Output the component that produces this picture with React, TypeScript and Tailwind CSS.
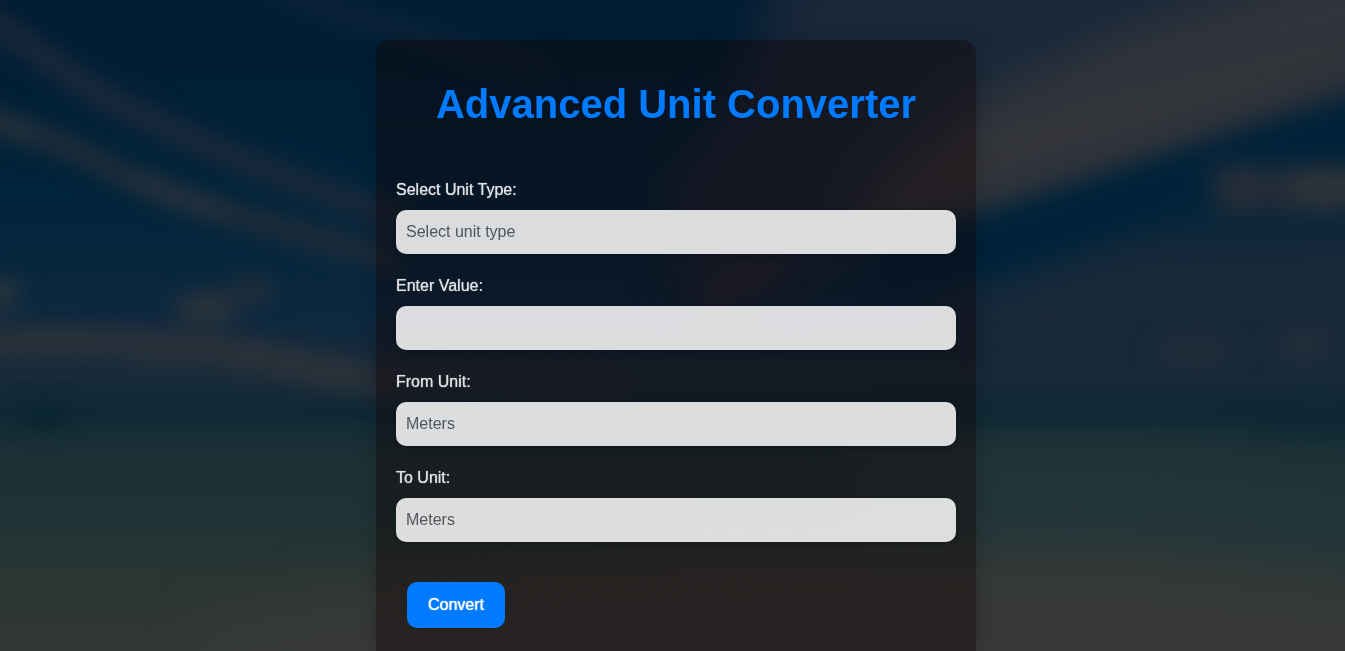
import { useState } from "react";
import type { FormEvent } from "react";

const units: Record<string, string[]> = {
  length: ["Meters", "Kilometers", "Miles", "Feet"],
  weight: ["Grams", "Kilograms", "Pounds"],
};

const fieldClass =
  "block h-11 w-full appearance-none rounded-[10px] bg-white/85 px-[10px] text-base text-[#50565d] shadow-[0_2px_5px_rgba(0,0,0,0.2)] outline-none focus:ring-2 focus:ring-[#007bff]";
const labelClass =
  "mb-2 block text-base leading-6 text-[#dfe2e6] [text-shadow:0_0_1px_#dfe2e6]";

function BeachBackdrop() {
  return (
    <svg
      className="absolute inset-0 h-full w-full"
      viewBox="0 0 1345 651"
      preserveAspectRatio="xMidYMid slice"
      aria-hidden="true"
    >
      <defs>
        <linearGradient id="scene" x1="0" y1="0" x2="0" y2="1">
          <stop offset="0" stopColor="#001c33" />
          <stop offset="0.3" stopColor="#00243b" />
          <stop offset="0.48" stopColor="#0c2840" />
          <stop offset="0.58" stopColor="#172b39" />
          <stop offset="0.635" stopColor="#0e2935" />
          <stop offset="0.69" stopColor="#1b3036" />
          <stop offset="0.8" stopColor="#203335" />
          <stop offset="0.9" stopColor="#2b3633" />
          <stop offset="1" stopColor="#323735" />
        </linearGradient>
        <filter id="soft" x="-20%" y="-50%" width="140%" height="200%" colorInterpolationFilters="sRGB">
          <feGaussianBlur stdDeviation="11" />
        </filter>
        <filter id="wide" x="-20%" y="-50%" width="140%" height="200%" colorInterpolationFilters="sRGB">
          <feGaussianBlur stdDeviation="24" />
        </filter>
      </defs>
      <rect width="1345" height="651" fill="url(#scene)" />
      <g filter="url(#soft)" fill="none" strokeLinecap="round">
        <path d="M-40 5C10 25 60 75 120 105S250 168 400 218" stroke="#1d293a" strokeWidth="24" />
        <path d="M-40 112C20 130 60 140 110 168S220 212 390 258" stroke="#222d39" strokeWidth="22" />
        <path d="M-40 112C0 120 20 130 30 134" stroke="#2a333a" strokeWidth="20" />
        <path d="M140 182L215 210" stroke="#2b323b" strokeWidth="22" />
        <path d="M260 -20C330 20 420 30 540 70" stroke="#0c2438" strokeWidth="24" />
        <path d="M-40 342C70 340 170 345 230 352S300 372 400 380" stroke="#2c323a" strokeWidth="32" />
        <path d="M380 372C450 382 540 376 620 385" stroke="#222b38" strokeWidth="22" />
      </g>
      <g filter="url(#wide)">
        <path d="M790 -60H1420V70L976 215L850 250L735 310L690 300L660 190L740 90Z" fill="#192739" />
        <path d="M870 190L970 100L1130 30L1420 -60V75L1180 150L976 212L860 240Z" fill="#31343b" />
        <path d="M940 300L1130 235L1420 225V370H940Z" fill="#182939" />
      </g>
      <g filter="url(#soft)">
        <path d="M870 255L976 225L1180 158L1420 85V152L1200 175L1160 215L1010 270L880 290Z" fill="#00223a" />
        <path d="M850 225L976 203L1160 144L1345 72V45L976 130Z" fill="#33353b" opacity="0.6" />
        <path d="M1215 165H1400V215H1215Z" fill="#1f2b37" />
        <ellipse cx="1240" cy="185" rx="30" ry="22" fill="#242d38" />
        <ellipse cx="1325" cy="187" rx="40" ry="22" fill="#2d333a" />
        <ellipse cx="205" cy="310" rx="32" ry="18" fill="#2a333a" />
        <ellipse cx="252" cy="291" rx="24" ry="13" fill="#232f39" />
        <ellipse cx="0" cy="294" rx="22" ry="17" fill="#27343a" />
        <ellipse cx="45" cy="415" rx="22" ry="12" fill="#08242d" />
        <ellipse cx="1195" cy="352" rx="40" ry="18" fill="#212c39" />
        <ellipse cx="1305" cy="345" rx="30" ry="18" fill="#222d3a" />
        <ellipse cx="1320" cy="425" rx="80" ry="12" fill="#0e2934" />
        <ellipse cx="740" cy="283" rx="50" ry="12" fill="#262a38" transform="rotate(-22 740 283)" />
      </g>
      <g filter="url(#wide)">
        <path d="M860 440H1180L1420 485V700H860Z" fill="#24363a" opacity="0.7" />
        <path d="M200 620L400 580L700 560L1100 550L1420 585V760H200Z" fill="#363937" />
      </g>
    </svg>
  );
}

interface UnitSelectProps {
  id: string;
  label: string;
  options: string[];
}

function UnitSelect({ id, label, options }: UnitSelectProps) {
  return (
    <div>
      <label htmlFor={id} className={labelClass}>
        {label}
      </label>
      <select id={id} className={fieldClass}>
        {options.map((unit) => (
          <option key={unit}>{unit}</option>
        ))}
      </select>
    </div>
  );
}

export default function App() {
  const [unitType, setUnitType] = useState("");
  const options = units[unitType] ?? units.length;

  return (
    <div className="relative isolate flex min-h-screen overflow-hidden bg-[#00243b] pt-10 pl-[7px] font-['Liberation_Sans',Arial,sans-serif]">
      <div className="absolute inset-0 -z-10">
        <BeachBackdrop />
      </div>
      <main className="mx-auto w-full max-w-[600px] rounded-t-[15px] bg-[rgba(16,0,0,0.38)] px-5 pt-10 shadow-[0_4px_20px_rgba(0,0,0,0.2)]">
        <h1 className="text-center text-[40px] leading-12 font-bold text-[#007bff]">
          Advanced Unit Converter
        </h1>
        <form
          className="mt-[50px] flex flex-col gap-5"
          onSubmit={(event: FormEvent) => event.preventDefault()}
        >
          <div>
            <label htmlFor="unit-type" className={labelClass}>
              Select Unit Type:
            </label>
            <select
              id="unit-type"
              className={fieldClass}
              value={unitType}
              onChange={(event) => setUnitType(event.target.value)}
            >
              <option value="">Select unit type</option>
              <option value="length">Length</option>
              <option value="weight">Weight</option>
            </select>
          </div>
          <div>
            <label htmlFor="value" className={labelClass}>
              Enter Value:
            </label>
            <input id="value" type="text" inputMode="decimal" className={fieldClass} />
          </div>
          <UnitSelect id="from-unit" label="From Unit:" options={options} />
          <UnitSelect id="to-unit" label="To Unit:" options={options} />
          <div className="px-[11px] pt-5">
            <button
              type="submit"
              className="rounded-[10px] bg-[#007bff] px-[21px] py-[11px] text-base leading-6 text-white [text-shadow:0_0_1px_#ffffff]"
            >
              Convert
            </button>
          </div>
        </form>
      </main>
    </div>
  );
}
